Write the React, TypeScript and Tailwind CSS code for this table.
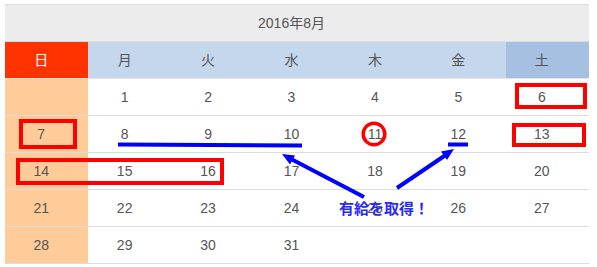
import React from 'react';

const WEEKDAYS = ['日', '月', '火', '水', '木', '金', '土'];

// August 2016 starts on a Monday
const WEEKS: (number | null)[][] = [
  [null, 1, 2, 3, 4, 5, 6],
  [7, 8, 9, 10, 11, 12, 13],
  [14, 15, 16, 17, 18, 19, 20],
  [21, 22, 23, 24, 25, 26, 27],
  [28, 29, 30, 31, null, null, null],
];

const headerClass = (i: number) => {
  if (i === 0) return 'bg-[#ff3300] text-white';
  if (i === 6) return 'bg-[#a6c0e1] text-[#555]';
  return 'bg-[#c5d7ec] text-[#555]';
};

const Markup: React.FC = () => (
  <svg className="absolute inset-0 pointer-events-none" width={597} height={267} viewBox="0 0 597 267">
    <g fill="none" stroke="#ff0000" strokeWidth={4}>
      <rect x={517} y={85} width={68} height={22} />
      <rect x={21} y={121} width={54} height={26} />
      <rect x={514} y={125} width={70} height={20} />
      <rect x={18} y={160} width={204} height={23} />
      <circle cx={374} cy={134} r={10.8} strokeWidth={3.5} />
    </g>
    <g stroke="#0000ff" strokeWidth={4} fill="#0000ff">
      <line x1={118} y1={144.5} x2={302} y2={145.5} />
      <line x1={448} y1={144.5} x2={468} y2={144.5} />
      <line x1={364} y1={197} x2={292} y2={159.5} />
      <polygon points="282,154 295,155.5 290,164.5" stroke="none" />
      <line x1={397} y1={188} x2={445} y2={155.5} />
      <polygon points="454,149 447,160 441,151.5" stroke="none" />
    </g>
  </svg>
);

export default function App() {
  return (
    <div className="relative w-[597px] h-[267px] bg-white pt-[4px] pl-[5px] font-['Liberation_Sans','Noto_Sans_CJK_JP',sans-serif] text-[14px]">
      <div className="w-[584px] border-t border-[#dddddd]">
        <div className="h-[37px] bg-[#ececec] border-b border-[#dddddd] flex items-center justify-center pr-[11px] text-[#555]">
          2016年8月
        </div>
        <div className="grid grid-cols-7 border-b border-[#e4e4e4]">
          {WEEKDAYS.map((d, i) => (
            <div key={d} className={`h-[36px] flex items-center justify-center pr-[11px] ${headerClass(i)}`}>
              {d}
            </div>
          ))}
        </div>
        {WEEKS.map((week, w) => (
          <div key={w} className="grid grid-cols-7 border-b border-[#dddddd]">
            {week.map((day, i) => (
              <div
                key={i}
                className={`h-[36px] flex items-center justify-center pr-[11px] text-[#555] ${i === 0 ? 'bg-[#ffcc99]' : 'bg-white'}`}
              >
                {day ?? ''}
              </div>
            ))}
          </div>
        ))}
      </div>
      <Markup />
      <span className="absolute left-[339px] top-[198px] text-[15px] leading-[20px] font-bold text-[#2a2af5] font-['Noto_Sans_CJK_JP',sans-serif]">
        有給を取得！
      </span>
    </div>
  );
}
